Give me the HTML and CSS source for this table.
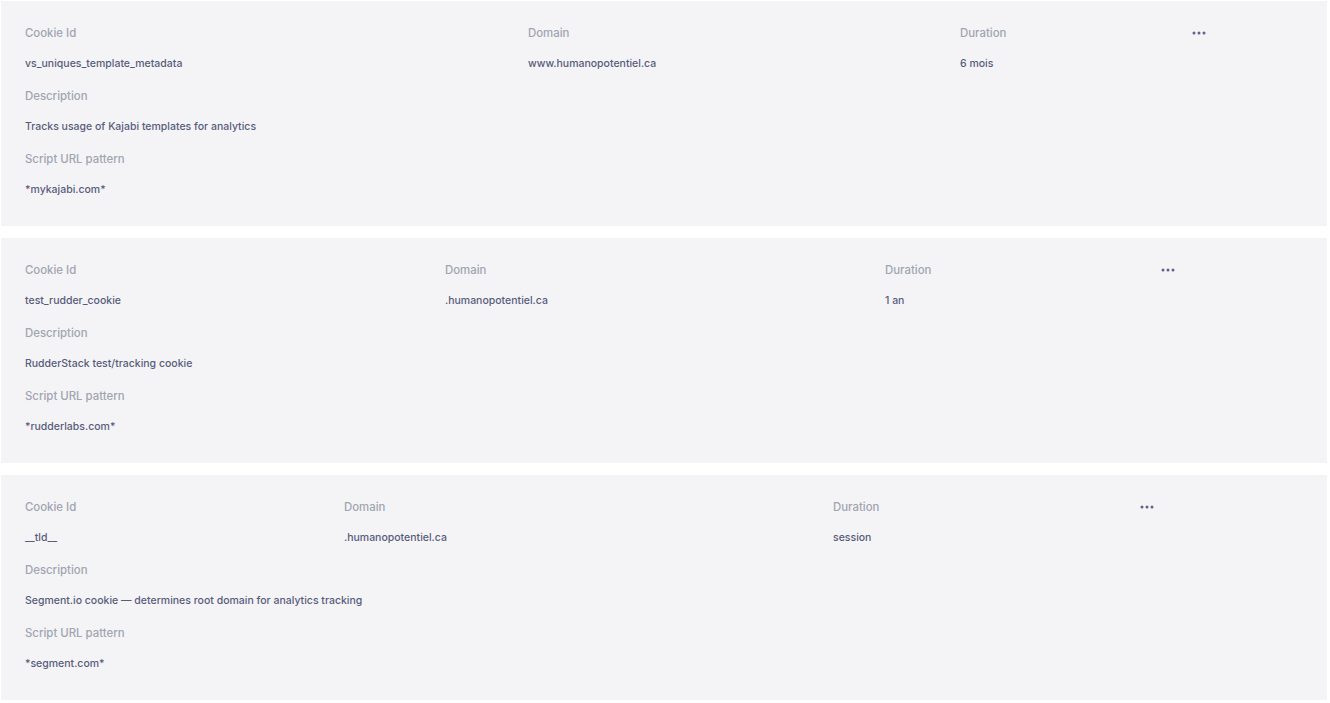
FILE: index.html
```html
<!DOCTYPE html>
<html lang="en">
<head>
<meta charset="utf-8">
<title>Cookies</title>
<link rel="stylesheet" href="styles.css">
</head>
<body>
<div class="list">
  <section class="card card-a">
    <div class="head">
      <div class="field"><div class="label">Cookie Id</div><div class="value">vs_uniques_template_metadata</div></div>
      <div class="field"><div class="label">Domain</div><div class="value">www.humanopotentiel.ca</div></div>
      <div class="field"><div class="label">Duration</div><div class="value">6 mois</div></div>
      <div class="more"><svg width="14" height="4" viewBox="0 0 14 4"><circle cx="2" cy="2" r="1.5"/><circle cx="7" cy="2" r="1.5"/><circle cx="12" cy="2" r="1.5"/></svg></div>
    </div>
    <div class="field"><div class="label">Description</div><div class="value">Tracks usage of Kajabi templates for analytics</div></div>
    <div class="field"><div class="label">Script URL pattern</div><div class="value">*mykajabi.com*</div></div>
  </section>
  <section class="card card-b">
    <div class="head">
      <div class="field"><div class="label">Cookie Id</div><div class="value">test_rudder_cookie</div></div>
      <div class="field"><div class="label">Domain</div><div class="value">.humanopotentiel.ca</div></div>
      <div class="field"><div class="label">Duration</div><div class="value">1 an</div></div>
      <div class="more"><svg width="14" height="4" viewBox="0 0 14 4"><circle cx="2" cy="2" r="1.5"/><circle cx="7" cy="2" r="1.5"/><circle cx="12" cy="2" r="1.5"/></svg></div>
    </div>
    <div class="field"><div class="label">Description</div><div class="value">RudderStack test/tracking cookie</div></div>
    <div class="field"><div class="label">Script URL pattern</div><div class="value">*rudderlabs.com*</div></div>
  </section>
  <section class="card card-c">
    <div class="head">
      <div class="field"><div class="label">Cookie Id</div><div class="value">__tld__</div></div>
      <div class="field"><div class="label">Domain</div><div class="value">.humanopotentiel.ca</div></div>
      <div class="field"><div class="label">Duration</div><div class="value">session</div></div>
      <div class="more"><svg width="14" height="4" viewBox="0 0 14 4"><circle cx="2" cy="2" r="1.5"/><circle cx="7" cy="2" r="1.5"/><circle cx="12" cy="2" r="1.5"/></svg></div>
    </div>
    <div class="field"><div class="label">Description</div><div class="value">Segment.io cookie — determines root domain for analytics tracking</div></div>
    <div class="field"><div class="label">Script URL pattern</div><div class="value">*segment.com*</div></div>
  </section>
</div>
</body>
</html>
```
FILE: styles.css
```css
* { box-sizing: border-box; }
html, body { margin: 0; padding: 0; background: #ffffff; }
body {
  font-family: Inter, "Noto Sans", sans-serif;
  line-height: 16px;
  font-weight: 500;
}
.list {
  display: flex;
  flex-direction: column;
  gap: 12px;
  padding: 1px 3px 0 1px;
}
.card {
  background: #f4f4f7;
  padding: 24px 24px 28px 24px;
  display: flex;
  flex-direction: column;
  gap: 16px;
}
.head {
  display: grid;
  align-items: start;
}
.card-a .head { grid-template-columns: 503px 432px 232px 1fr; }
.card-b .head { grid-template-columns: 420px 440px 276px 1fr; }
.card-c .head { grid-template-columns: 319px 489px 307px 1fr; }
.field {
  display: flex;
  flex-direction: column;
  gap: 15px;
}
.label { color: #a1a5af; font-size: 11.4px; height: 16px; }
.value { color: #585c7a; font-size: 10.5px; height: 16px; }
.more {
  height: 16px;
  display: flex;
  align-items: center;
}
.more svg { fill: #5f6388; display: block; }
```
